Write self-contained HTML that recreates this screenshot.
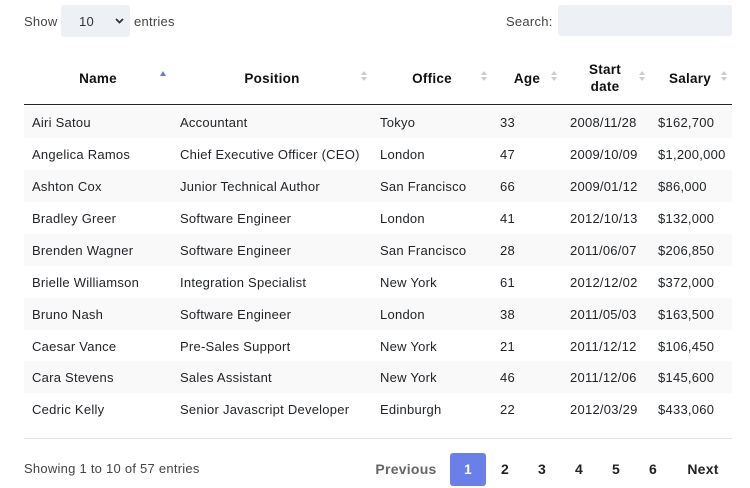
<!DOCTYPE html>
<html><head><style>
body{margin:0;width:750px;height:488px;background:#fff;font-family:"Liberation Sans",sans-serif;font-size:13px;letter-spacing:0.25px;color:#212529;position:relative;overflow:hidden}
.a{position:absolute;white-space:nowrap}
.th{position:absolute;font-weight:bold;font-size:13.5px;color:#111;text-align:center;line-height:17px}
.row{position:absolute;left:24px;width:708px;height:32px}
.row span{position:absolute;top:9px;white-space:nowrap}
.s{position:absolute;width:0;height:0;border-left:3px solid transparent;border-right:3px solid transparent}
.pg{position:absolute;top:453px;height:33px;line-height:33px;font-weight:bold;font-size:14px;text-align:center;color:#222}
</style></head><body>
<div class="a" style="left:24px;top:14px;color:#444">Show</div>
<div class="a" style="left:61px;top:5px;width:69px;height:32px;background:#edf1f6;border-radius:3px"></div>
<div class="a" style="left:79px;top:14px;color:#333">10</div>
<svg class="a" style="left:115px;top:18px" width="9" height="6"><path d="M1 1l3.5 3.5L8 1" stroke="#333" stroke-width="1.8" fill="none"/></svg>
<div class="a" style="left:134px;top:14px;color:#444">entries</div>
<div class="a" style="left:506px;top:14px;color:#444">Search:</div>
<div class="a" style="left:558px;top:5px;width:174px;height:31px;background:#edf1f6;border-radius:3px"></div>

<div class="th" style="left:60px;width:76px;top:70px">Name</div>
<div class="th" style="left:230px;width:84px;top:70px">Position</div>
<div class="th" style="left:400px;width:64px;top:70px">Office</div>
<div class="th" style="left:507px;width:40px;top:70px">Age</div>
<div class="th" style="left:575px;width:60px;top:61px">Start<br>date</div>
<div class="th" style="left:660px;width:60px;top:70px">Salary</div>
<div class="s" style="left:160px;top:71px;border-bottom:5px solid #6b7ad8"></div>
<div class="s" style="left:361px;top:71px;border-bottom:4px solid #ccc"></div><div class="s" style="left:361px;top:77px;border-top:4px solid #ccc"></div>
<div class="s" style="left:481px;top:71px;border-bottom:4px solid #ccc"></div><div class="s" style="left:481px;top:77px;border-top:4px solid #ccc"></div>
<div class="s" style="left:551px;top:71px;border-bottom:4px solid #ccc"></div><div class="s" style="left:551px;top:77px;border-top:4px solid #ccc"></div>
<div class="s" style="left:639px;top:71px;border-bottom:4px solid #ccc"></div><div class="s" style="left:639px;top:77px;border-top:4px solid #ccc"></div>
<div class="s" style="left:721px;top:71px;border-bottom:4px solid #ccc"></div><div class="s" style="left:721px;top:77px;border-top:4px solid #ccc"></div>
<div class="a" style="left:24px;top:104px;width:708px;height:1px;background:#222"></div>

<div class="row" style="top:106px;background:#f9f9f9"><span style="left:8px">Airi Satou</span><span style="left:156px">Accountant</span><span style="left:356px">Tokyo</span><span style="left:476px">33</span><span style="left:546px">2008/11/28</span><span style="left:634px">$162,700</span></div>
<div class="row" style="top:138px"><span style="left:8px">Angelica Ramos</span><span style="left:156px">Chief Executive Officer (CEO)</span><span style="left:356px">London</span><span style="left:476px">47</span><span style="left:546px">2009/10/09</span><span style="left:634px">$1,200,000</span></div>
<div class="row" style="top:170px;background:#f9f9f9"><span style="left:8px">Ashton Cox</span><span style="left:156px">Junior Technical Author</span><span style="left:356px">San Francisco</span><span style="left:476px">66</span><span style="left:546px">2009/01/12</span><span style="left:634px">$86,000</span></div>
<div class="row" style="top:202px"><span style="left:8px">Bradley Greer</span><span style="left:156px">Software Engineer</span><span style="left:356px">London</span><span style="left:476px">41</span><span style="left:546px">2012/10/13</span><span style="left:634px">$132,000</span></div>
<div class="row" style="top:234px;background:#f9f9f9"><span style="left:8px">Brenden Wagner</span><span style="left:156px">Software Engineer</span><span style="left:356px">San Francisco</span><span style="left:476px">28</span><span style="left:546px">2011/06/07</span><span style="left:634px">$206,850</span></div>
<div class="row" style="top:266px"><span style="left:8px">Brielle Williamson</span><span style="left:156px">Integration Specialist</span><span style="left:356px">New York</span><span style="left:476px">61</span><span style="left:546px">2012/12/02</span><span style="left:634px">$372,000</span></div>
<div class="row" style="top:298px;background:#f9f9f9"><span style="left:8px">Bruno Nash</span><span style="left:156px">Software Engineer</span><span style="left:356px">London</span><span style="left:476px">38</span><span style="left:546px">2011/05/03</span><span style="left:634px">$163,500</span></div>
<div class="row" style="top:330px"><span style="left:8px">Caesar Vance</span><span style="left:156px">Pre-Sales Support</span><span style="left:356px">New York</span><span style="left:476px">21</span><span style="left:546px">2011/12/12</span><span style="left:634px">$106,450</span></div>
<div class="row" style="top:361px;background:#f9f9f9"><span style="left:8px">Cara Stevens</span><span style="left:156px">Sales Assistant</span><span style="left:356px">New York</span><span style="left:476px">46</span><span style="left:546px">2011/12/06</span><span style="left:634px">$145,600</span></div>
<div class="row" style="top:393px"><span style="left:8px">Cedric Kelly</span><span style="left:156px">Senior Javascript Developer</span><span style="left:356px">Edinburgh</span><span style="left:476px">22</span><span style="left:546px">2012/03/29</span><span style="left:634px">$433,060</span></div>
<div class="a" style="left:24px;top:438px;width:708px;height:1px;background:#dde5ee"></div>

<div class="a" style="left:24px;top:461px;color:#444">Showing 1 to 10 of 57 entries</div>
<div class="pg" style="left:372px;width:68px;color:#666">Previous</div>
<div class="pg" style="left:450px;width:36px;background:#6a7fe8;color:#fff;border-radius:3px">1</div>
<div class="pg" style="left:487px;width:36px">2</div>
<div class="pg" style="left:524px;width:36px">3</div>
<div class="pg" style="left:561px;width:36px">4</div>
<div class="pg" style="left:598px;width:36px">5</div>
<div class="pg" style="left:635px;width:36px">6</div>
<div class="pg" style="left:678px;width:50px">Next</div>
</body></html>
